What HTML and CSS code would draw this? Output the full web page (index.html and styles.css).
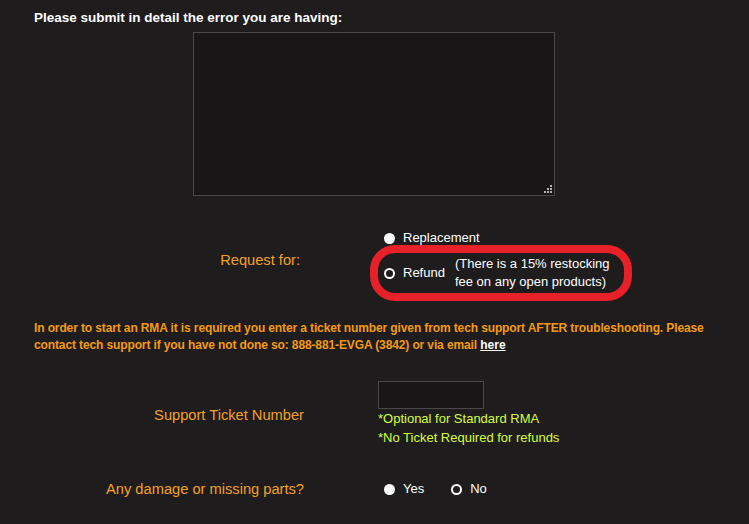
FILE: index.html
```html
<!DOCTYPE html>
<html>
<head>
<meta charset="utf-8">
<link rel="stylesheet" href="styles.css">
</head>
<body>
<div class="page">
  <h2 class="heading">Please submit in detail the error you are having:</h2>
  <div class="ta-wrap">
    <div class="textarea">
      <span class="grip">
        <i class="d r0 c2"></i>
        <i class="d r1 c1"></i><i class="d r1 c2"></i>
        <i class="d r2 c0"></i><i class="d r2 c1"></i><i class="d r2 c2"></i>
      </span>
    </div>
  </div>

  <div class="row row-request">
    <div class="label">Request for:</div>
    <div class="field">
      <div class="opt opt-replace"><span class="radio"></span><span>Replacement</span></div>
      <div class="refund-box">
        <div class="opt"><span class="radio checked"></span><span>Refund</span></div>
        <div class="note">(There is a 15% restocking<br>fee on any open products)</div>
      </div>
    </div>
  </div>

  <p class="notice">In order to start an RMA it is required you enter a ticket number given from tech support AFTER troubleshooting. Please contact tech support if you have not done so: 888-881-EVGA (3842) or via email <a href="#">here</a></p>

  <div class="row row-ticket">
    <div class="label">Support Ticket Number</div>
    <div class="field">
      <div class="input"></div>
      <div class="hint">*Optional for Standard RMA</div>
      <div class="hint">*No Ticket Required for refunds</div>
    </div>
  </div>

  <div class="row row-damage">
    <div class="label">Any damage or missing parts?</div>
    <div class="field inline">
      <div class="opt"><span class="radio"></span><span>Yes</span></div>
      <div class="opt"><span class="radio checked"></span><span>No</span></div>
    </div>
  </div>
</div>
</body>
</html>
```

FILE: styles.css
```css
html, body {
  margin: 0;
  padding: 0;
  background: #1e1c1d;
}
body {
  font-family: "Liberation Sans", Arial, sans-serif;
  color: #ffffff;
  width: 749px;
  height: 524px;
  overflow: hidden;
}
.page {
  padding: 10px 0 0 34px;
}
.heading {
  margin: 0;
  font-size: 13.5px;
  font-weight: bold;
  line-height: 16px;
  color: #ffffff;
}
.ta-wrap {
  padding: 6px 0 0 159px;
}
.textarea {
  position: relative;
  width: 360px;
  height: 162px;
  background: #181617;
  border: 1px solid #4a4849;
}
.grip {
  position: absolute;
  right: 2px;
  bottom: 2px;
  width: 8px;
  height: 8px;
}
.d {
  position: absolute;
  width: 2px;
  height: 2px;
  background: #b5b3b4;
}
.r0 { top: 0; }
.r1 { top: 3px; }
.r2 { top: 6px; }
.c0 { left: 0; }
.c1 { left: 3px; }
.c2 { left: 6px; }
.row {
  display: grid;
  grid-template-columns: 270px 1fr;
  column-gap: 74px;
}
.label {
  text-align: right;
  color: #f2a126;
  font-size: 14.67px;
}
.field {
  font-size: 13px;
}
.row-request {
  margin-top: 34px;
  align-items: center;
}
.row-request .label {
  padding-bottom: 12px;
  padding-right: 4px;
}
.opt {
  display: flex;
  align-items: center;
  gap: 8px;
  line-height: 16px;
}
.opt-replace {
  padding-left: 6px;
  margin-bottom: -1px;
}
.radio {
  display: inline-block;
  box-sizing: border-box;
  width: 11px;
  height: 11px;
  border-radius: 50%;
  background: #ffffff;
}
.radio.checked {
  background: #1e1c1d;
  border: 2.5px solid #ffffff;
}
.refund-box {
  display: flex;
  align-items: center;
  gap: 10px;
  width: 240px;
  height: 40px;
  margin-left: -8px;
  padding: 0 0 0 6px;
  border: 8px solid #e8202a;
  border-radius: 25px;
  box-sizing: content-box;
  background: #1e1c1d;
}
.note {
  line-height: 18px;
}
.notice {
  margin: 19px 0 0 0;
  width: 700px;
  font-size: 12px;
  font-weight: bold;
  line-height: 17px;
  color: #f39a10;
  letter-spacing: -0.12px;
}
.notice a {
  color: #ffffff;
  text-decoration: underline;
  letter-spacing: 0;
}
.row-ticket {
  margin-top: 27px;
  align-items: center;
}
.row-ticket .label {
  padding-top: 2px;
}
.input {
  width: 104px;
  height: 26px;
  background: #181617;
  border: 1px solid #4a4849;
  margin-bottom: 1px;
}
.hint {
  color: #d5ff3a;
  font-size: 13px;
  line-height: 18.5px;
}
.row-damage {
  margin-top: 34px;
  align-items: center;
}
.field.inline {
  display: flex;
  gap: 27px;
  padding-left: 6px;
}
```
